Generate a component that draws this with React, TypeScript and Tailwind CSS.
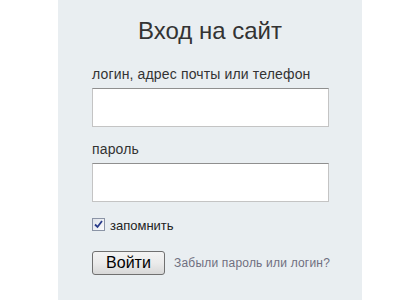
import React from "react";

export default function App() {
  return (
    <div className="w-[400px] h-[300px] bg-white overflow-hidden" style={{ fontFamily: '"Liberation Sans", Arial, sans-serif' }}>
      <div className="ml-[58px] w-[304px] h-[300px] bg-[#e9eef1] pt-[17px]">
        <h1 className="text-[24px] leading-[28px] text-center text-[#333333] font-normal">Вход на сайт</h1>
        <div className="pl-[34px]">
          <label className="block mt-[21px] text-[14px] leading-[17px] tracking-[0.15px] text-[#333333]">логин, адрес почты или телефон</label>
          <input type="text" className="block mt-[5px] w-[237px] h-[39px] bg-white border border-[#c4c4c4] border-t-[#8f8f8f] outline-none" />
          <label className="block mt-[14px] text-[14px] leading-[17px] tracking-[0.15px] text-[#333333]">пароль</label>
          <input type="password" className="block mt-[5px] w-[237px] h-[39px] bg-white border border-[#c4c4c4] border-t-[#8f8f8f] outline-none" />
          <div className="flex items-end mt-[16px] h-[13px]">
            <span className="w-[13px] h-[13px] border border-[#8b94a6] bg-gradient-to-br from-[#dfe3ea] to-[#fbfbfc] flex items-center justify-center">
              <svg width="9" height="9" viewBox="0 0 9 9">
                <path d="M1 4.5 L3.5 7 L8 1" fill="none" stroke="#2a3c8a" strokeWidth="1.8" />
              </svg>
            </span>
            <span className="ml-[5px] text-[13px] leading-[15px] mb-[-2px] text-[#222222]">запомнить</span>
          </div>
          <div className="flex items-center mt-[20px]">
            <button className="w-[73px] h-[24px] rounded-[3px] border border-[#707070] bg-gradient-to-b from-[#f3f3f3] via-[#ebebeb] to-[#d8d8d8] text-[16px] leading-[20px] text-black">Войти</button>
            <a className="ml-[9px] text-[12px] leading-[15px] tracking-[0.2px] text-[#6f6f80]">Забыли пароль или логин?</a>
          </div>
        </div>
      </div>
    </div>
  );
}
